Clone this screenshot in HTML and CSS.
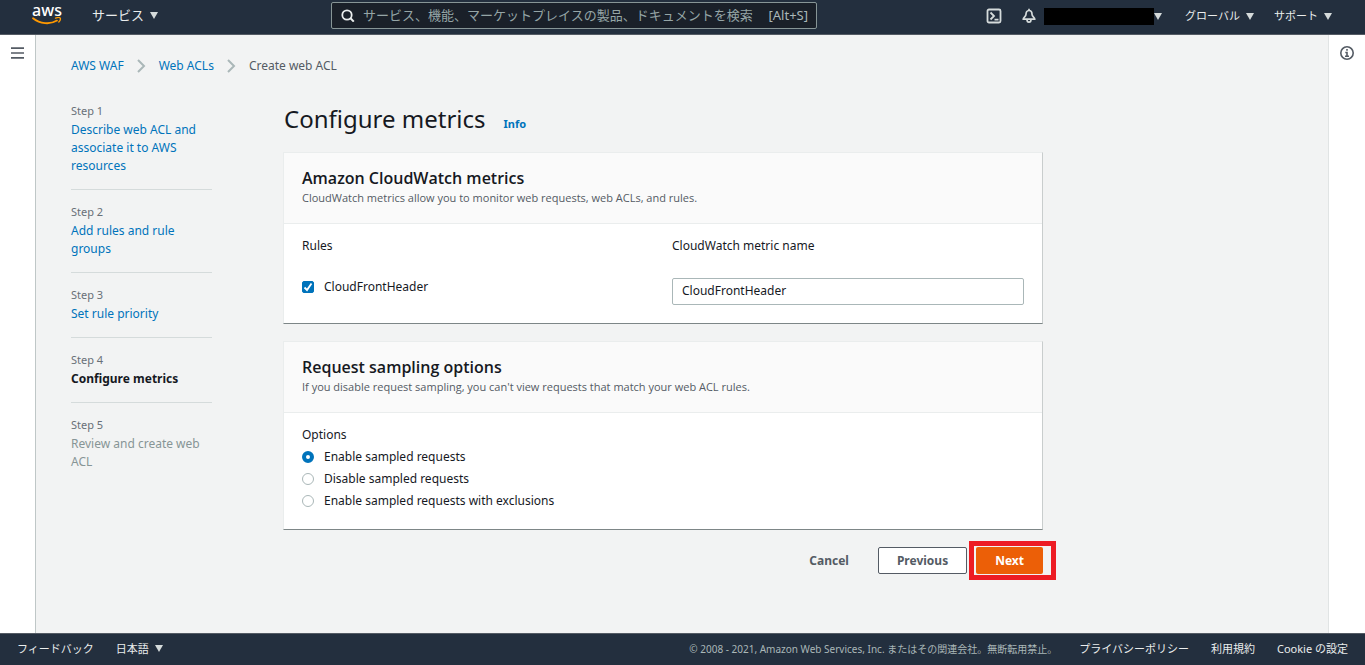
FILE: index.html
```html
<!DOCTYPE html>
<html lang="ja">
<head>
  <meta charset="UTF-8" />
  <meta name="viewport" content="width=device-width, initial-scale=1" />
  <title>Create web ACL - AWS WAF</title>
  <link rel="stylesheet" href="styles.css">
</head>
<body>
  <header class="topbar">
    <a class="logo" href="#" aria-label="aws">
      <span class="logo-text">aws</span>
      <svg class="logo-smile" width="30" height="9" viewBox="0 0 30 9" aria-hidden="true">
        <path d="M1 1.200C8 7 18 7.800 25 3.600" fill="none" stroke="#ff9900" stroke-width="1.800" stroke-linecap="round" />
        <path d="M23.500 1.200c2-.8 4-.8 4.700-.2.500.8-.2 2.700-1.400 4" fill="none" stroke="#ff9900" stroke-width="1.300" stroke-linecap="round" />
      </svg>
    </a>
    <button class="menu-btn menu-services" type="button">サービス<span class="caret"></span></button>

    <form class="search" role="search">
      <svg width="14" height="14" viewBox="0 0 14 14" aria-hidden="true">
        <circle cx="6" cy="7" r="4.700" fill="none" stroke="#eaeded" stroke-width="1.800" />
        <path d="M9.500 10.300L12.800 13.600" stroke="#eaeded" stroke-width="2" />
      </svg>
      <input type="text" aria-label="検索" placeholder="サービス、機能、マーケットプレイスの製品、ドキュメントを検索します" />
      <span class="shortcut">[Alt+S]</span>
    </form>

    <nav class="tools" aria-label="アカウント">
      <button class="icon-btn" type="button" aria-label="CloudShell">
        <svg width="16" height="16" viewBox="0 0 16 16" fill="none" stroke="#d5dbdb" stroke-width="1.800" aria-hidden="true">
          <rect x="1.500" y="1.500" width="13" height="13" rx="1.500" />
          <path d="M4.500 4.500L8 8l-3.500 3.500M8.500 11.700h4" />
        </svg>
      </button>
      <button class="icon-btn" type="button" aria-label="通知">
        <svg width="14" height="16" viewBox="0 0 14 16" fill="none" stroke="#d5dbdb" stroke-width="1.700" stroke-linejoin="round" aria-hidden="true">
          <path d="M7 2.500C4.800 2.500 4 4.300 4 6.300 4 8.800 1.200 9.300 1.200 11.200h11.600c0-1.900-2.800-2.400-2.800-4.900C10 4.300 9.200 2.500 7 2.500zM7 .8v1.700M5 11.500c0 3.600 4 3.600 4 0" />
        </svg>
      </button>
      <button class="menu-btn account" type="button" aria-label="アカウント"><span class="account-name"></span><span class="caret"></span></button>
      <button class="menu-btn" type="button">グローバル<span class="caret"></span></button>
      <button class="menu-btn" type="button">サポート<span class="caret"></span></button>
    </nav>
  </header>

  <div class="layout">
    <aside class="rail rail-left">
      <button class="icon-btn" type="button" aria-label="Menu">
        <svg width="13" height="12" viewBox="0 0 13 12" stroke="#545b64" stroke-width="1.700" aria-hidden="true">
          <path d="M0 1.200h13M0 6h13M0 10.800h13" />
        </svg>
      </button>
    </aside>

    <main class="page">
      <nav class="breadcrumb" aria-label="Breadcrumb">
        <a href="#">AWS WAF</a>
        <svg width="9" height="14" viewBox="0 0 9 14" aria-hidden="true"><path d="M1 1l6 6-6 6" /></svg>
        <a href="#">Web ACLs</a>
        <svg width="9" height="14" viewBox="0 0 9 14" aria-hidden="true"><path d="M1 1l6 6-6 6" /></svg>
        <span>Create web ACL</span>
      </nav>

      <div class="wizard">
        <ol class="steps">
          <li><small>Step 1</small><a href="#">Describe web ACL and associate it to AWS resources</a></li>
          <li><small>Step 2</small><a href="#">Add rules and rule groups</a></li>
          <li><small>Step 3</small><a href="#">Set rule priority</a></li>
          <li><small>Step 4</small><span class="current">Configure metrics</span></li>
          <li><small>Step 5</small><span class="upcoming">Review and create web ACL</span></li>
        </ol>

        <form class="content">
          <div class="heading">
            <h1>Configure metrics</h1>
            <a class="info" href="#">Info</a>
          </div>

          <section class="card">
            <header class="card-header">
              <h2>Amazon CloudWatch metrics</h2>
              <p>CloudWatch metrics allow you to monitor web requests, web ACLs, and rules.</p>
            </header>
            <div class="card-body metrics">
              <span>Rules</span>
              <label for="metric-name">CloudWatch metric name</label>
              <label class="option"><input type="checkbox" checked />CloudFrontHeader</label>
              <input class="text-input" id="metric-name" type="text" value="CloudFrontHeader" />
            </div>
          </section>

          <section class="card">
            <header class="card-header">
              <h2>Request sampling options</h2>
              <p>If you disable request sampling, you can't view requests that match your web ACL rules.</p>
            </header>
            <div class="card-body sampling" role="radiogroup" aria-labelledby="options-label">
              <span id="options-label">Options</span>
              <label class="option"><input type="radio" name="sampling" checked />Enable sampled requests</label>
              <label class="option"><input type="radio" name="sampling" />Disable sampled requests</label>
              <label class="option"><input type="radio" name="sampling" />Enable sampled requests with exclusions</label>
            </div>
          </section>

          <div class="actions">
            <button class="btn btn-link" type="button">Cancel</button>
            <button class="btn btn-normal" type="button">Previous</button>
            <button class="btn btn-primary" type="submit">Next</button>
          </div>
        </form>
      </div>
    </main>

    <aside class="rail rail-right">
      <button class="icon-btn" type="button" aria-label="Info">
        <svg width="14" height="14" viewBox="0 0 14 14" fill="none" stroke="#545b64" stroke-width="1.600" aria-hidden="true">
          <circle cx="7" cy="7" r="6.200" />
          <path d="M7 3v1.800M5.300 6.500H7v3.700M5 10.200h4" />
        </svg>
      </button>
    </aside>
  </div>

  <footer class="footer">
    <a href="#">フィードバック</a>
    <button class="menu-btn" type="button">日本語<span class="caret"></span></button>
    <small>© 2008 - 2021, Amazon Web Services, Inc. またはその関連会社。無断転用禁止。</small>
    <a href="#">プライバシーポリシー</a>
    <a href="#">利用規約</a>
    <a href="#">Cookie の設定</a>
  </footer>
</body>
</html>
```
FILE: styles.css
```css
:root{
  --nav:#232f3e;
  --nav-text:#eaeded;
  --page:#f2f3f3;
  --link:#0073bb;
  --text:#16191f;
  --muted:#687078;
  --grey:#545b64;
  --line:#d5dbdb;
  --field:#aab7b8;
  --orange:#ec5f07;
}

* { box-sizing: border-box; }
body{
  margin:0; min-height:100vh;
  display:flex; flex-direction:column;
  font: 12px/18px "Noto Sans", "Noto Sans CJK JP", sans-serif;
  color:var(--text); background:var(--page);
}
a{ color:var(--link); text-decoration:none; }
h1, h2, p, ol{ margin:0; padding:0; }
button, input{ font:inherit; color:inherit; margin:0; }
button{ border:0; padding:0; background:none; cursor:pointer; }
svg{ display:block; flex:none; }

/* Top bar */
.topbar{
  display:flex; align-items:center;
  height:35px; padding:0 33px 4px 31px;
  background:var(--nav); color:var(--nav-text);
  border-bottom:1px solid var(--grey);
}
.logo{ display:flex; flex-direction:column; align-items:center; width:32px; color:#fff; }
.logo-text{ font-size:16px; line-height:13px; font-weight:500; }
.menu-btn{ display:flex; align-items:center; gap:6px; font-size:11px; white-space:nowrap; }
.menu-services{ margin-left:29px; font-size:13px; }
.caret{
  border:4px solid transparent; border-top:7px solid var(--line); border-bottom:0;
}

.search{
  display:flex; align-items:center; gap:8px;
  flex:0 1 486px; height:27px; margin-left:173px; padding:0 8px 0 9px;
  background:#1a2029; border:1px solid #879596; border-radius:2px;
  color:#aab7b8; font-size:13px;
}
.search input{
  flex:1; min-width:0; padding:0; border:0; outline:0; background:none;
}
.search input::placeholder{ color:#95a5a6; }
.shortcut{ margin-left:6px; }

.tools{ display:flex; align-items:center; gap:20px; margin-left:auto; padding-top:2px; }
.account{ gap:0; margin-left:-12px; margin-right:3px; }
.account-name{ width:110px; height:17px; background:#000; }

/* Page frame */
.layout{ flex:1; display:flex; }
.rail{ width:36px; padding:11px 0; background:#fff; display:flex; justify-content:center; align-items:flex-start; }
.rail .icon-btn{ height:14px; }
.rail-left{ border-right:1px solid #bfc7c7; }
.rail-right{ width:37px; border-left:1px solid #e1e4e4; }
.page{ flex:1; padding:22px 35px; }

.breadcrumb{ display:flex; align-items:center; gap:13px; color:var(--grey); }
.breadcrumb path{ fill:none; stroke:var(--field); stroke-width:2; }

.wizard{ display:flex; gap:71px; padding-top:27px; }
.steps{ width:141px; flex:none; list-style:none; }
.steps li{ display:flex; flex-direction:column; gap:1px; padding-bottom:14px; }
.steps li + li{ border-top:1px solid var(--line); padding-top:13px; }
.steps small{ font-size:11px; color:var(--muted); }
.current{ font-weight:700; }
.upcoming{ color:#879596; }

.content{ flex:0 1 760px; }
.heading{ display:flex; align-items:baseline; gap:18px; margin-bottom:16px; padding-left:1px; }
h1{ font-size:24px; line-height:34px; font-weight:400; }
.info{ font-size:11px; font-weight:700; }

/* Cards */
.card{
  margin-bottom:17px; background:#fff;
  border:1px solid #eaeded; border-right-color:#c9cdcd; border-bottom-color:#7d8687;
}
.card-header{
  padding:15px 18px 16px; background:#fafafa; border-bottom:1px solid #eaeded;
  font-family:"Open Sans", sans-serif;
}
h2{ font-size:16px; line-height:20px; font-weight:600; margin-bottom:1px; }
.card-header p{ font-size:11px; color:var(--grey); }
.card-body{ padding:13px 18px 18px; }
.metrics{ display:grid; grid-template-columns:1fr 1fr; gap:23px 18px; }
.sampling{ display:flex; flex-direction:column; gap:4px; padding-bottom:19px; }
.option{ display:flex; align-items:center; gap:10px; height:18px; }
.option input{
  appearance:none; width:12px; height:12px; flex:none;
  border:1px solid var(--field); border-radius:50%; background:#fff;
}
.option input[type="radio"]:checked{ border:4px solid var(--link); }
.option input[type="checkbox"]{
  border-radius:2px; border-color:var(--link);
  background:var(--link) url("data:image/svg+xml,%3Csvg xmlns='http://www.w3.org/2000/svg' viewBox='0 0 10 10'%3E%3Cpath d='M1.500 5.500L4 8l4.500-6.500' fill='none' stroke='white' stroke-width='1.800'/%3E%3C/svg%3E");
}
.text-input{
  width:100%; height:27px; padding:0 9px 2px;
  border:1px solid var(--field); border-radius:2px; background:#fff;
}

/* Actions */
.actions{ display:flex; justify-content:flex-end; }
.btn{
  height:27px; padding:0 18px; border:1px solid transparent; border-radius:2px;
  font-weight:700; color:var(--grey);
}
.btn-link{ margin-right:10px; }
.btn-normal{ background:#fff; border-color:var(--grey); }
.btn-primary{ position:relative; margin-left:9px; background:var(--orange); color:#fff; }
.btn-primary::after{
  content:""; position:absolute; inset:-7px -14px -7px -8px;
  border:5px solid #ed1c24;
}

/* Footer */
.footer{
  display:flex; align-items:center; gap:22px;
  height:32px; padding:0 17px 2px 17px; font-size:11px;
  background:var(--nav); color:var(--nav-text); border-top:1px solid var(--grey);
}
.footer a{ color:inherit; white-space:nowrap; }
.footer small{ margin-left:auto; font-size:10px; color:#aab7b8; white-space:nowrap; }
```
